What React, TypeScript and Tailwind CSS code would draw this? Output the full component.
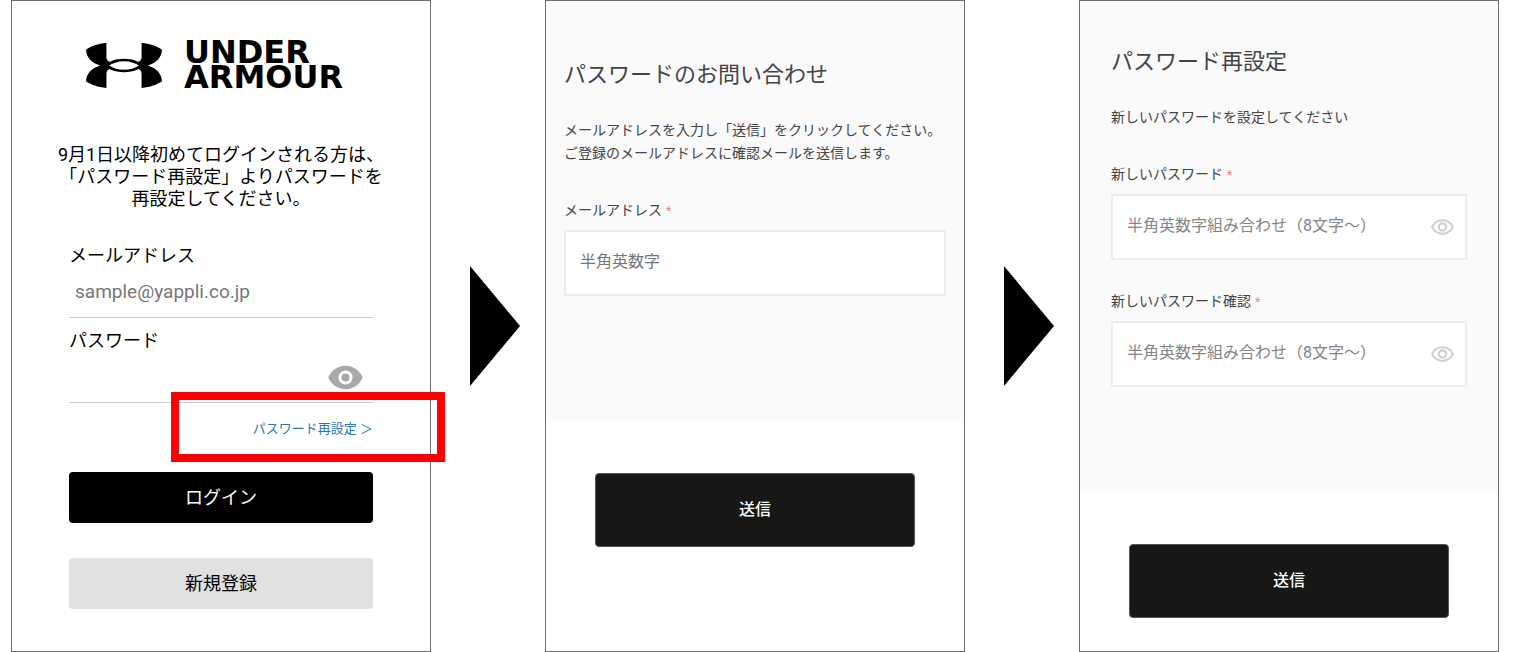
import React from "react";
import { MdOutlineVisibility } from "react-icons/md";

function Logo() {
  return (
    <div className="flex items-center gap-[22px] pl-[74px]">
      <svg
        viewBox="79 66 227 134"
        className="h-[45px] w-[76px] shrink-0"
        role="img"
        aria-label="Under Armour"
      >
        <path
          fillRule="evenodd"
          d="M140 66 V110 C142 119 146 123 152 121 C164 115 178 113 192.500 113 C207 113 221 115 233 121 C239 123 243 119 245 110 V66 C270 68 292 76 306 86 C305 108 290 125 264 133 C290 141 305 158 306 180 C292 190 270 198 245 200 V156 C243 147 239 143 233 145 C221 151 207 153 192.500 153 C178 153 164 151 152 145 C146 143 142 147 140 156 V200 C115 198 93 190 79 180 C80 158 95 141 121 133 C95 125 80 108 79 86 C93 76 115 68 140 66 Z M148 133 C160 141 176 146 192.500 146 C209 146 225 141 237 133 C225 125 209 120 192.500 120 C176 120 160 125 148 133 Z"
        />
      </svg>
      <p className="font-['DejaVu_Sans',sans-serif] text-[32px] leading-[25px] font-bold">
        UNDER
        <br />
        ARMOUR
      </p>
    </div>
  );
}

function EyeIcon() {
  return (
    <svg viewBox="1 4 22 16" className="h-[25px] w-[35px] fill-[#a9a9a9]">
      <path
        fillRule="evenodd"
        d="M12 4.500C7 4.500 2.730 7.610 1 12c1.730 4.390 6 7.500 11 7.500s9.270-3.110 11-7.500c-1.730-4.390-6-7.500-11-7.500z M12 7.500a4.500 4.500 0 1 0 0 9a4.500 4.500 0 1 0 0-9z"
      />
      <circle cx="12" cy="12" r="2.600" />
    </svg>
  );
}

function Arrow() {
  return (
    <svg
      viewBox="0 0 50 120"
      className="ml-[39px] h-[120px] w-[50px] self-center"
      aria-hidden="true"
    >
      <path d="M0 0 L50 60 L0 120 Z" />
    </svg>
  );
}

function RequiredLabel({ id, children }: { id: string; children: string }) {
  return (
    <label htmlFor={id} className="block text-sm leading-5">
      {children}
      <span className="ml-1 text-xs text-[#f08080]">*</span>
    </label>
  );
}

function PasswordField({ id, label }: { id: string; label: string }) {
  return (
    <div>
      <RequiredLabel id={id}>{label}</RequiredLabel>
      <div className="mt-[10px] flex h-[66px] items-center border-2 border-[#ededed] bg-white pr-[10px] pl-[14px]">
        <input
          id={id}
          type="password"
          placeholder="半角英数字組み合わせ（8文字～）"
          className="h-full min-w-0 flex-1 pb-1 text-base outline-none placeholder:text-[#858585]"
        />
        <button type="button" aria-label="パスワードを表示">
          <MdOutlineVisibility className="size-[25px] text-[#cfcfcf]" />
        </button>
      </div>
    </div>
  );
}

function SubmitButton() {
  return (
    <div className="px-[49px] pt-[53px] pb-[33px]">
      <button
        type="submit"
        className="h-[74px] w-full rounded-sm border border-[#555] bg-[#171717] text-base font-medium text-white"
      >
        送信
      </button>
    </div>
  );
}

function LoginPanel() {
  return (
    <form className="border border-[#707070] pt-[39px] pb-[42px] text-lg text-black">
      <Logo />
      <p className="mt-[54px] text-center leading-[22px] whitespace-nowrap">
        9月1日以降初めてログインされる方は、
        <br />
        「パスワード再設定」よりパスワードを
        <br />
        再設定してください。
      </p>
      <div className="mt-[34px] px-[57px]">
        <label htmlFor="email" className="block leading-6">
          メールアドレス
        </label>
        <input
          id="email"
          type="email"
          placeholder="sample@yappli.co.jp"
          className="h-[50px] w-full border-b border-[#ccc] px-[6px] pb-[2px] text-[19px] outline-none placeholder:text-[#777]"
        />
        <label htmlFor="password" className="mt-[11px] block leading-6">
          パスワード
        </label>
        <div className="flex h-[50px] items-center border-b border-[#ccc] pr-[10px]">
          <input
            id="password"
            type="password"
            className="h-full min-w-0 flex-1 px-[6px] outline-none"
          />
          <button type="button" aria-label="パスワードを表示">
            <EyeIcon />
          </button>
        </div>
        <div className="relative mt-4 flex justify-end">
          <a href="#reset" className="text-[13px] leading-5 text-[#2878a8]">
            パスワード再設定 ＞
          </a>
          <span className="pointer-events-none absolute -top-[27px] -right-[72px] -bottom-[23px] w-[274px] border-8 border-[#f00]" />
        </div>
        <button
          type="submit"
          className="mt-[33px] h-[51px] w-full rounded-sm bg-black text-white"
        >
          ログイン
        </button>
        <button
          type="button"
          className="mt-[35px] h-[51px] w-full rounded-sm bg-[#e1e1e1]"
        >
          新規登録
        </button>
      </div>
    </form>
  );
}

function InquiryPanel() {
  return (
    <form className="border border-[#707070] text-[#444]">
      <div className="bg-[#fafafa] px-[18px] pt-[58px] pb-[124px]">
        <h2 className="text-[22px] leading-8">パスワードのお問い合わせ</h2>
        <p className="mt-7 text-sm leading-[23px] whitespace-nowrap">
          メールアドレスを入力し「送信」をクリックしてください。
          <br />
          ご登録のメールアドレスに確認メールを送信します。
        </p>
        <div className="mt-[35px]">
          <RequiredLabel id="inquiry-email">メールアドレス</RequiredLabel>
          <input
            id="inquiry-email"
            type="text"
            placeholder="半角英数字"
            className="mt-[10px] h-[66px] w-full border-2 border-[#ededed] bg-white px-[14px] pb-1 text-base outline-none placeholder:text-[#777]"
          />
        </div>
      </div>
      <SubmitButton />
    </form>
  );
}

function ResetPanel() {
  return (
    <form className="border border-[#707070] text-[#444]">
      <div className="bg-[#fafafa] px-[31px] pt-[45px] pb-[104px]">
        <h2 className="text-[22px] leading-8">パスワード再設定</h2>
        <p className="mt-7 text-sm leading-[23px]">
          新しいパスワードを設定してください
        </p>
        <div className="mt-[35px] flex flex-col gap-[31px]">
          <PasswordField id="new-password" label="新しいパスワード" />
          <PasswordField id="confirm-password" label="新しいパスワード確認" />
        </div>
      </div>
      <SubmitButton />
    </form>
  );
}

export default function App() {
  return (
    <main className="grid min-h-screen grid-cols-[1fr_114px_1fr_114px_1fr] bg-white pr-[14px] pl-[11px] font-['Roboto','Noto_Sans_CJK_JP',sans-serif]">
      <LoginPanel />
      <Arrow />
      <InquiryPanel />
      <Arrow />
      <ResetPanel />
    </main>
  );
}
